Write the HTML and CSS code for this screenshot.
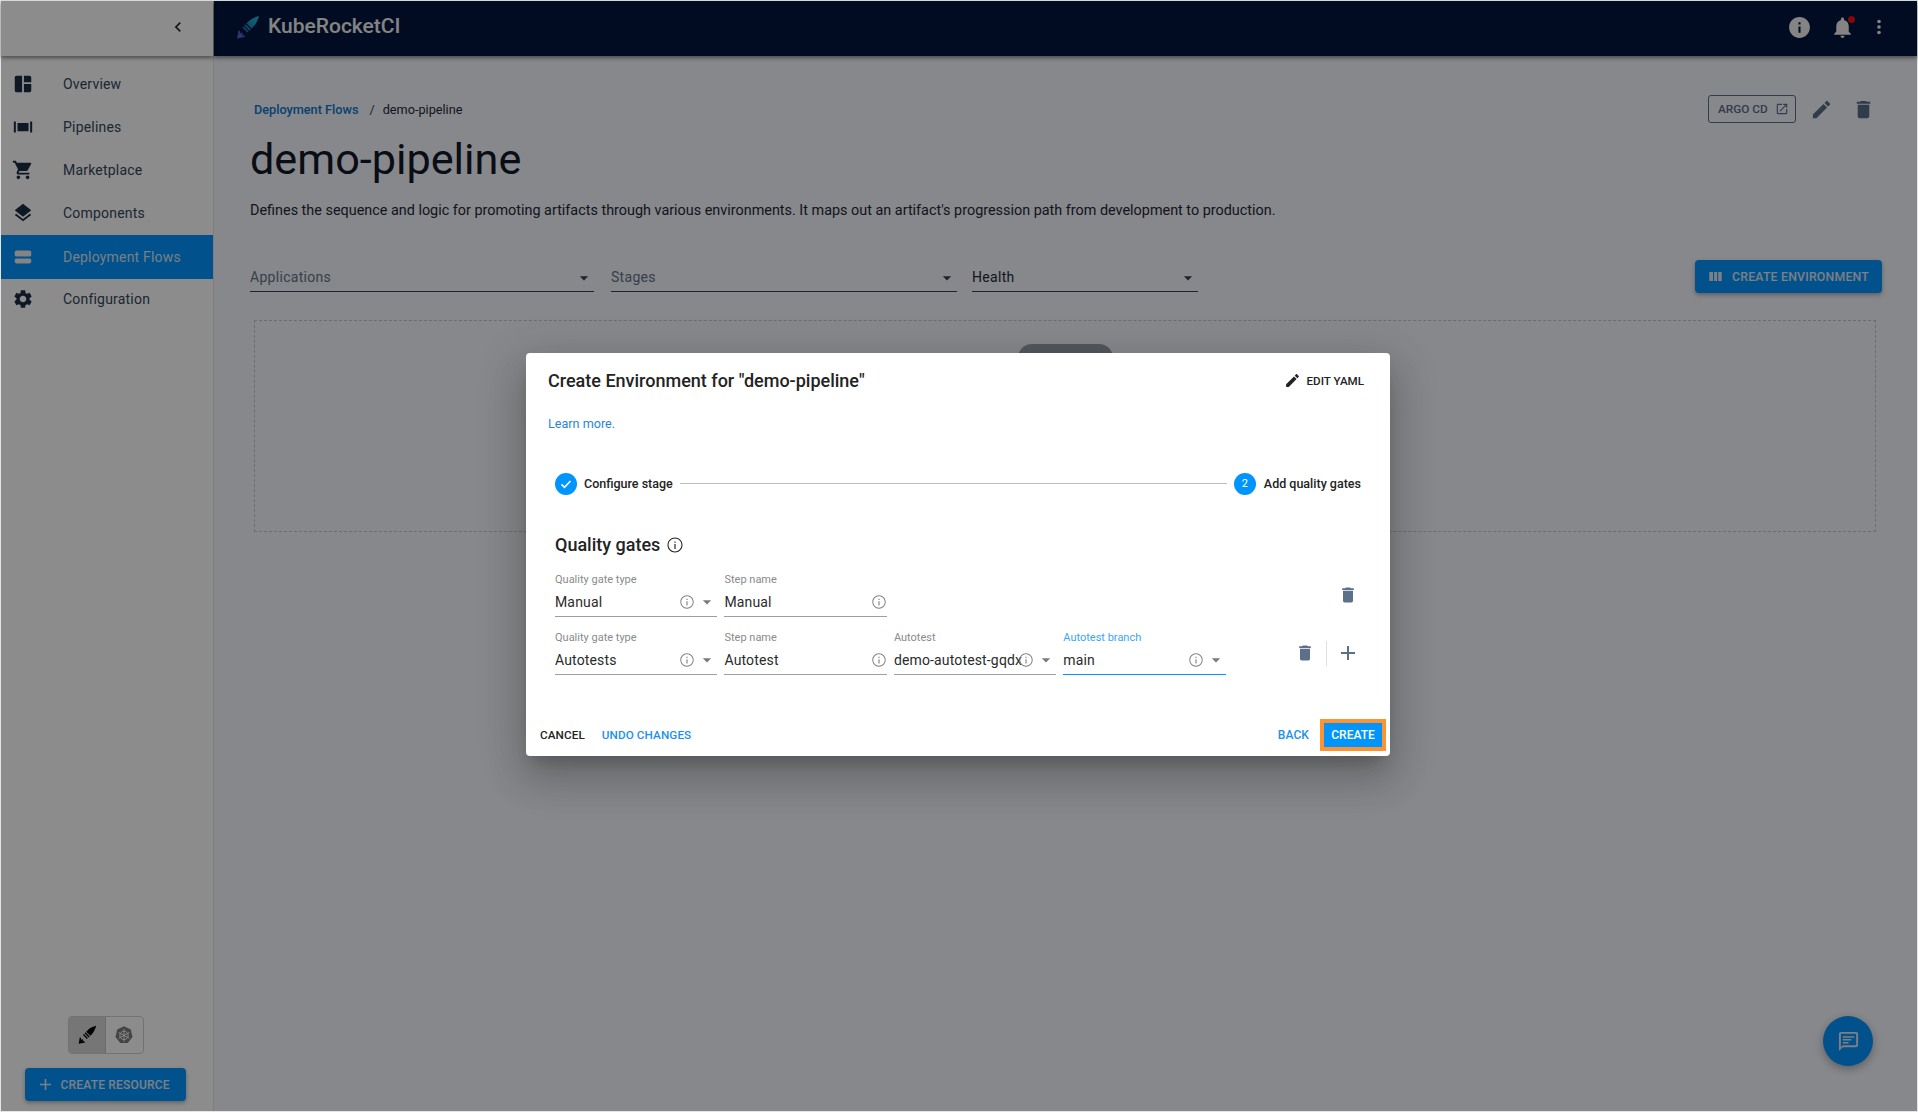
FILE: index.html
```html
<!DOCTYPE html>
<html lang="en">
<head>
  <meta charset="UTF-8">
  <title>demo-pipeline | KubeRocketCI</title>
  <link rel="stylesheet" href="styles.css">
</head>
<body>

  <svg class="defs" width="0" height="0">
    <linearGradient id="logo-grad" gradientUnits="userSpaceOnUse" x1="22" y1="2" x2="9" y2="15">
      <stop offset="0" stop-color="#22b8d8"/>
      <stop offset="1" stop-color="#1a74b8"/>
    </linearGradient>
    <symbol id="i-edit" viewBox="0 0 24 24"><path d="M3 17.25V21h3.75L17.81 9.94l-3.75-3.75L3 17.25zM20.71 7.04c.39-.39.39-1.02 0-1.41l-2.34-2.34c-.39-.39-1.02-.39-1.41 0l-1.83 1.83 3.75 3.75 1.83-1.83z"/></symbol>
    <symbol id="i-trash" viewBox="0 0 24 24"><path d="M6 19c0 1.1.9 2 2 2h8c1.1 0 2-.9 2-2V7H6v12zM19 4h-3.5l-1-1h-5l-1 1H5v2h14V4z"/></symbol>
    <symbol id="i-info" viewBox="0 0 24 24"><path d="M11.2 10.8h1.6v6.4h-1.6zm0-3.6h1.6v1.8h-1.6zM12 2C6.48 2 2 6.48 2 12s4.48 10 10 10 10-4.48 10-10S17.52 2 12 2zm0 18.6c-4.74 0-8.6-3.86-8.6-8.6S7.26 3.4 12 3.4s8.6 3.86 8.6 8.6-3.86 8.6-8.6 8.6z"/></symbol>
    <symbol id="i-caret" viewBox="0 0 24 24"><path d="M7 10l5 5 5-5z"/></symbol>
    <symbol id="i-plus" viewBox="0 0 24 24"><path d="M19 13h-6v6h-2v-6H5v-2h6V5h2v6h6v2z"/></symbol>
    <symbol id="i-blade" viewBox="0 0 24 24"><path d="M23 1c-4 1-8 3-10.500 5.500L11 8l5 5 1.500-1.500C20 9 22 5 23 1zM10.200 8.800l5 5-1.200 1.200-5-5zM8.200 10.800l4.800 4.800-1.100 1.100-4.800-4.800z"/></symbol>
    <symbol id="i-hilt" viewBox="0 0 24 24"><path d="M2 22.500l1.500-8 1.600 1.600-.6 2.300 1.700-1.700 1.500 1.500-1.700 1.700 2.300-.6 1.600 1.600z"/></symbol>
  </svg>

  <div class="app">
    <aside class="sidebar">
      <div class="sidebar-top">
        <svg class="chevron" viewBox="0 0 24 24"><path d="M15.41 7.41L14 6l-6 6 6 6 1.41-1.41L10.83 12z"/></svg>
      </div>

      <nav class="nav">
        <a class="nav-item">
          <svg class="nav-icon" viewBox="0 0 24 24"><path d="M5 3h6v18H5c-1.100 0-2-.9-2-2V5c0-1.100.9-2 2-2zm8 0h6c1.100 0 2 .9 2 2v5h-8V3zm0 9h8v7c0 1.100-.9 2-2 2h-6v-9z"/></svg>
          Overview
        </a>
        <a class="nav-item">
          <svg class="nav-icon" viewBox="0 0 24 24"><path d="M2 6h2.200v12H2zm17.800 0H22v12h-2.200zM6 7.500h12v9H6z"/></svg>
          Pipelines
        </a>
        <a class="nav-item">
          <svg class="nav-icon" viewBox="0 0 24 24"><path d="M7 18c-1.100 0-1.990.9-1.990 2S5.900 22 7 22s2-.9 2-2-.9-2-2-2zM1 2v2h2l3.600 7.590-1.350 2.450c-.16.28-.25.61-.25.96 0 1.100.9 2 2 2h12v-2H7.420c-.14 0-.25-.11-.25-.25l.03-.12.9-1.630h7.450c.75 0 1.410-.41 1.750-1.030l3.580-6.490c.08-.14.12-.31.12-.48 0-.55-.45-1-1-1H5.210l-.94-2H1zm16 16c-1.100 0-1.990.9-1.990 2s.89 2 1.990 2 2-.9 2-2-.9-2-2-2z"/></svg>
          Marketplace
        </a>
        <a class="nav-item">
          <svg class="nav-icon" viewBox="0 0 24 24"><path d="M11.990 18.540l-7.370-5.730L3 14.070l9 7 9-7-1.630-1.270-7.380 5.740zM12 16l7.360-5.730L21 9l-9-7-9 7 1.630 1.270L12 16z"/></svg>
          Components
        </a>
        <a class="nav-item active">
          <svg class="nav-icon" viewBox="0 0 24 24"><path d="M5 5h14c1.100 0 2 .9 2 2v2.500c0 1.100-.9 2-2 2H5c-1.100 0-2-.9-2-2V7c0-1.100.9-2 2-2zm0 8.500h14c1.100 0 2 .9 2 2V17c0 1.100-.9 2-2 2H5c-1.100 0-2-.9-2-2v-1.500c0-1.100.9-2 2-2z"/></svg>
          Deployment Flows
        </a>
        <a class="nav-item">
          <svg class="nav-icon" viewBox="0 0 24 24"><path d="M19.140 12.940c.04-.3.06-.61.06-.94 0-.32-.02-.64-.07-.94l2.030-1.580c.18-.14.23-.41.12-.61l-1.920-3.320c-.12-.22-.37-.29-.59-.22l-2.390.96c-.5-.38-1.030-.7-1.620-.94l-.36-2.540c-.04-.24-.24-.41-.48-.41h-3.840c-.24 0-.43.17-.47.41l-.36 2.540c-.59.24-1.130.57-1.620.94l-2.390-.96c-.22-.08-.47 0-.59.22L2.740 8.870c-.12.21-.08.47.12.61l2.030 1.580c-.05.3-.09.63-.09.94s.02.64.07.94l-2.030 1.580c-.18.14-.23.41-.12.61l1.920 3.320c.12.22.37.29.59.22l2.390-.96c.5.38 1.030.7 1.620.94l.36 2.540c.05.24.24.41.48.41h3.840c.24 0 .44-.17.47-.41l.36-2.540c.59-.24 1.130-.56 1.620-.94l2.390.96c.22.08.47 0 .59-.22l1.920-3.320c.12-.22.07-.47-.12-.61l-2.010-1.580zM12 15.600c-1.980 0-3.600-1.620-3.600-3.600s1.620-3.600 3.600-3.600 3.600 1.620 3.600 3.600-1.620 3.600-3.600 3.600z"/></svg>
          Configuration
        </a>
      </nav>

      <div class="sidebar-bottom">
        <div class="toggle-group">
          <span class="toggle selected">
            <svg viewBox="0 0 24 24">
              <use href="#i-blade"/>
              <use href="#i-hilt"/>
            </svg>
          </span>
          <span class="toggle">
            <svg viewBox="0 0 24 24">
              <path class="kube-body" d="M12 1.500l8.200 3.900 2 8.900-5.700 7.200h-9l-5.700-7.200 2-8.900z"/>
              <g class="kube-wheel">
                <circle cx="12" cy="12.500" r="5"/>
                <path d="M12 5v15M5.500 9l13 7M18.500 9l-13 7"/>
              </g>
            </svg>
          </span>
        </div>
        <button class="btn-primary btn-resource">
          <svg viewBox="0 0 24 24"><use href="#i-plus"/></svg>
          CREATE RESOURCE
        </button>
      </div>
    </aside>

    <div class="content">
      <header class="topbar">
        <div class="brand">
          <svg class="brand-logo" viewBox="0 0 24 24">
            <use class="logo-blade" href="#i-blade"/>
            <use class="logo-hilt" href="#i-hilt"/>
          </svg>
          <span class="brand-name">KubeRocketCI</span>
        </div>
        <div class="topbar-actions">
          <svg class="top-info" viewBox="0 0 24 24"><path d="M12 2C6.480 2 2 6.480 2 12s4.480 10 10 10 10-4.480 10-10S17.520 2 12 2zm1 15h-2v-6h2v6zm0-8h-2V7h2v2z"/></svg>
          <span class="bell">
            <svg viewBox="0 0 24 24"><path d="M12 22c1.100 0 2-.9 2-2h-4c0 1.100.89 2 2 2zm6-6v-5c0-3.070-1.640-5.640-4.500-6.320V4c0-.83-.67-1.500-1.500-1.500s-1.500.67-1.500 1.500v.68C7.630 5.360 6 7.920 6 11v5l-2 2v1h16v-1l-2-2z"/></svg>
            <span class="bell-dot"></span>
          </span>
          <svg class="top-more" viewBox="0 0 24 24"><circle cx="12" cy="6" r="2"/><circle cx="12" cy="12" r="2"/><circle cx="12" cy="18" r="2"/></svg>
        </div>
      </header>

      <main class="page">
        <div class="page-head">
          <div class="breadcrumbs">
            <a class="crumb-link">Deployment Flows</a>
            <span class="crumb-sep">/</span>
            <span class="crumb-current">demo-pipeline</span>
          </div>
          <div class="page-actions">
            <button class="btn-outline">
              ARGO CD
              <svg viewBox="0 0 24 24"><path d="M19 19H5V5h7V3H5c-1.110 0-2 .9-2 2v14c0 1.100.89 2 2 2h14c1.100 0 2-.9 2-2v-7h-2v7zM14 3v2h3.590l-9.830 9.830 1.410 1.410L19 6.410V10h2V3h-7z"/></svg>
            </button>
            <svg class="page-icon" viewBox="0 0 24 24"><use href="#i-edit"/></svg>
            <svg class="page-icon" viewBox="0 0 24 24"><use href="#i-trash"/></svg>
          </div>
        </div>

        <h1 class="page-title">demo-pipeline</h1>
        <p class="page-desc">Defines the sequence and logic for promoting artifacts through various environments. It maps out an artifact's progression path from development to production.</p>

        <div class="filters">
          <div class="filter filter-apps">Applications<svg viewBox="0 0 24 24"><use href="#i-caret"/></svg></div>
          <div class="filter filter-stages">Stages<svg viewBox="0 0 24 24"><use href="#i-caret"/></svg></div>
          <div class="filter filter-health">Health<svg viewBox="0 0 24 24"><use href="#i-caret"/></svg></div>
          <button class="btn-primary btn-env">
            <svg viewBox="0 0 24 24"><path d="M10 18.500h4.300v-13H10v13zm-6.800 0h5.300v-13H3.200v13zM15.800 5.500v13h5v-13h-5z"/></svg>
            CREATE ENVIRONMENT
          </button>
        </div>

        <section class="empty-panel">
          <span class="empty-pill"></span>
        </section>
      </main>
    </div>

    <button class="chat-fab">
      <svg viewBox="0 0 24 24"><path d="M20 2H4c-1.100 0-2 .9-2 2v18l4-4h14c1.100 0 2-.9 2-2V4c0-1.100-.9-2-2-2zm0 14H6l-2 2V4h16v12zM6 6.500h12V8H6zm0 3h9V11H6zm0 3h6V14H6z"/></svg>
    </button>

    <div class="backdrop">
      <div class="modal">
        <div class="modal-head">
          <h2 class="modal-title">Create Environment for "demo-pipeline"</h2>
          <button class="btn-yaml"><svg viewBox="0 0 24 24"><use href="#i-edit"/></svg>EDIT YAML</button>
        </div>
        <a class="learn-more">Learn more.</a>

        <div class="stepper">
          <span class="step-dot"><svg viewBox="0 0 24 24"><path d="M6 12.500l4 4 8-8.500"/></svg></span>
          <span class="step-label">Configure stage</span>
          <span class="step-line"></span>
          <span class="step-dot">2</span>
          <span class="step-label">Add quality gates</span>
        </div>

        <h3 class="gates-title">Quality gates <svg viewBox="0 0 24 24"><use href="#i-info"/></svg></h3>

        <div class="gate-row">
          <div class="gate-fields">
            <div class="field">
              <label>Quality gate type</label>
              <div class="field-value"><span>Manual</span><svg class="info" viewBox="0 0 24 24"><use href="#i-info"/></svg><svg class="caret" viewBox="0 0 24 24"><use href="#i-caret"/></svg></div>
            </div>
            <div class="field">
              <label>Step name</label>
              <div class="field-value"><span>Manual</span><svg class="info" viewBox="0 0 24 24"><use href="#i-info"/></svg></div>
            </div>
          </div>
          <div class="gate-actions">
            <svg class="action-trash" viewBox="0 0 24 24"><use href="#i-trash"/></svg>
          </div>
        </div>

        <div class="gate-row">
          <div class="gate-fields">
            <div class="field">
              <label>Quality gate type</label>
              <div class="field-value"><span>Autotests</span><svg class="info" viewBox="0 0 24 24"><use href="#i-info"/></svg><svg class="caret" viewBox="0 0 24 24"><use href="#i-caret"/></svg></div>
            </div>
            <div class="field">
              <label>Step name</label>
              <div class="field-value"><span>Autotest</span><svg class="info" viewBox="0 0 24 24"><use href="#i-info"/></svg></div>
            </div>
            <div class="field">
              <label>Autotest</label>
              <div class="field-value"><span>demo-autotest-gqdx</span><svg class="info" viewBox="0 0 24 24"><use href="#i-info"/></svg><svg class="caret" viewBox="0 0 24 24"><use href="#i-caret"/></svg></div>
            </div>
            <div class="field focused">
              <label>Autotest branch</label>
              <div class="field-value"><span>main</span><svg class="info" viewBox="0 0 24 24"><use href="#i-info"/></svg><svg class="caret" viewBox="0 0 24 24"><use href="#i-caret"/></svg></div>
            </div>
          </div>
          <div class="gate-actions">
            <svg class="action-trash" viewBox="0 0 24 24"><use href="#i-trash"/></svg>
            <span class="gate-divider"></span>
            <svg viewBox="0 0 24 24"><use href="#i-plus"/></svg>
          </div>
        </div>

        <div class="modal-foot">
          <button class="btn-text btn-cancel">CANCEL</button>
          <button class="btn-text btn-undo">UNDO CHANGES</button>
          <button class="btn-text btn-back">BACK</button>
          <button class="btn-create">CREATE</button>
        </div>
      </div>
    </div>
  </div>

</body>
</html>
```

FILE: styles.css
```css
* {
  box-sizing: border-box;
}
html, body {
  height: 100%;
}
body {
  margin: 0;
  padding: 1px;
  background-color: #e4e4e4;
  font-family: Roboto, "Liberation Sans", sans-serif;
  color: #1f2937;
  overflow: hidden;
}
button {
  font-family: inherit;
  border: none;
  background: none;
  padding: 0;
}
.defs {
  position: absolute;
}
.app {
  position: relative;
  display: flex;
  height: 100%;
  background-color: #f5f7fd;
}

/* sidebar */
.sidebar {
  width: 213px;
  flex-shrink: 0;
  display: flex;
  flex-direction: column;
  background-color: #ffffff;
  border-right: 1px solid #e6e6e6;
}
.sidebar-top {
  height: 55px;
  display: flex;
  align-items: center;
  justify-content: flex-end;
  padding: 0 25px 3px 0;
  background-color: #fff;
  box-shadow: 0 2px 4px rgba(0, 0, 0, 0.45);
  position: relative;
}
.chevron {
  width: 20px;
  height: 20px;
  fill: #1c2a3a;
}
.nav {
  padding-top: 6px;
  flex: 1;
}
.nav-item {
  display: flex;
  align-items: center;
  height: 43px;
  padding-left: 11px;
  font-size: 14px;
  letter-spacing: 0.2px;
  color: #33475c;
}
.nav-item.active {
  height: 44px;
  margin-top: 1px;
  margin-bottom: -2px;
  padding-bottom: 1px;
  background-color: #0094ff;
  color: #dbe7f2;
}
.nav-icon {
  width: 22px;
  height: 22px;
  margin-right: 29px;
  fill: #1c2e44;
}
.nav-item.active .nav-icon {
  fill: #f0f0f0;
}
.sidebar-bottom {
  display: flex;
  flex-direction: column;
  align-items: center;
  padding: 0 4px 10px 0;
}
.toggle-group {
  display: flex;
  margin-bottom: 14px;
  margin-left: 1px;
  border: 1px solid #cfcfcf;
  border-radius: 4px;
}
.toggle {
  width: 37px;
  height: 36px;
  display: flex;
  align-items: center;
  justify-content: center;
}
.toggle.selected {
  background-color: #d8d8d8;
  border-right: 1px solid #c4c4c4;
}
.toggle svg {
  width: 20px;
  height: 20px;
  fill: #000;
}
.kube-body {
  fill: #7c7c7c;
}
.kube-wheel {
  fill: none;
  stroke: #fff;
  stroke-width: 1.100;
}
.btn-primary {
  display: flex;
  align-items: center;
  background-color: #0094ff;
  color: #e2e8f0;
  border-radius: 4px;
  font-weight: 500;
  box-shadow: 0 2px 4px rgba(0, 0, 0, 0.3);
}
.btn-resource {
  width: 161px;
  height: 33px;
  padding-left: 11px;
  font-size: 12px;
  letter-spacing: 0.2px;
}
.btn-resource svg {
  width: 19px;
  height: 19px;
  margin-right: 6px;
  fill: #e2e8f0;
}

/* top bar */
.content {
  flex: 1;
  min-width: 0;
  display: flex;
  flex-direction: column;
}
.topbar {
  height: 55px;
  flex-shrink: 0;
  display: flex;
  align-items: center;
  justify-content: space-between;
  padding: 0 27px 0 21px;
  background-color: #02163f;
  box-shadow: 0 2px 4px rgba(0, 0, 0, 0.45);
}
.brand {
  display: flex;
  align-items: center;
  padding-bottom: 5px;
}
.brand-logo {
  width: 25px;
  height: 25px;
  margin-right: 8px;
  margin-top: 2px;
}
.logo-blade {
  fill: url(#logo-grad);
}
.logo-hilt {
  fill: #5a63cf;
}
.brand-name {
  font-size: 21px;
  font-weight: 500;
  color: #f0f0f0;
}
.topbar-actions {
  display: flex;
  align-items: center;
  gap: 18px;
  padding-bottom: 3px;
}
.topbar-actions svg {
  display: block;
  fill: #f0f0f0;
}
.top-info {
  width: 25px;
  height: 25px;
}
.bell {
  position: relative;
  display: block;
  margin-right: -5px;
}
.bell svg {
  width: 25px;
  height: 25px;
}
.bell-dot {
  position: absolute;
  top: 1px;
  right: 0;
  width: 7px;
  height: 7px;
  border-radius: 50%;
  background-color: #f01010;
}
.top-more {
  width: 22px;
  height: 22px;
}

/* page */
.page {
  flex: 1;
  padding: 30px 35px 0 36px;
}
.page-head {
  display: flex;
  align-items: center;
  justify-content: space-between;
  height: 46px;
}
.breadcrumbs {
  display: flex;
  align-items: center;
  font-size: 12.700px;
  padding-left: 4px;
}
.crumb-link {
  color: #0a78cc;
  font-weight: 500;
}
.crumb-sep {
  margin: 0 8px 0 11px;
  color: #334155;
}
.crumb-current {
  color: #1f2937;
}
.page-actions {
  display: flex;
  align-items: center;
}
.btn-outline {
  display: flex;
  align-items: center;
  height: 28px;
  width: 88px;
  padding-left: 9px;
  border: 1px solid #5b6e88;
  border-radius: 3px;
  color: #5b6e88;
  font-size: 11.800px;
  font-weight: 500;
}
.btn-outline svg {
  width: 14px;
  height: 14px;
  margin-left: 7px;
  fill: #5b6e88;
}
.page-icon {
  width: 23px;
  height: 23px;
  margin-left: 14px;
  fill: #596d89;
}
.page-icon:last-child {
  margin-left: 19px;
  margin-right: 7px;
}
.page-title {
  margin: 3px 0 0;
  font-size: 43.200px;
  font-weight: 400;
  line-height: 50px;
  color: #111827;
}
.page-desc {
  margin: 16px 0 0;
  font-size: 14.400px;
  line-height: 20px;
  color: #1f2937;
}
.filters {
  display: flex;
  align-items: center;
  margin-top: 38px;
}
.filter {
  display: flex;
  align-items: center;
  justify-content: space-between;
  height: 32px;
  padding: 4px 0 1px 0;
  border-bottom: 1px solid #334155;
  font-size: 14px;
  letter-spacing: 0.3px;
  color: #64748b;
}
.filter svg {
  width: 20px;
  height: 20px;
  margin-top: 1px;
  fill: #334155;
}
.filter-apps {
  width: 344px;
  margin-right: 17px;
}
.filter-stages {
  width: 346px;
  margin-right: 15px;
}
.filter-health {
  width: 226px;
  color: #1f2937;
}
.btn-env {
  margin-left: auto;
  margin-top: 1px;
  width: 187px;
  height: 33px;
  padding-left: 12px;
  font-size: 12.300px;
  letter-spacing: 0.2px;
}
.btn-env svg {
  width: 17px;
  height: 17px;
  margin-right: 8px;
  fill: #e2e8f0;
}
.empty-panel {
  position: relative;
  margin: 27px 6px 0 4px;
  height: 212px;
  border: 1px dashed #c4c6cc;
  display: flex;
  justify-content: center;
}
.empty-pill {
  width: 95px;
  height: 30px;
  margin-top: 23px;
  border-radius: 14px;
  background-color: #9a9eae;
}
.chat-fab {
  position: absolute;
  right: 44px;
  bottom: 45px;
  width: 50px;
  height: 50px;
  display: flex;
  align-items: center;
  justify-content: center;
  border-radius: 50%;
  background-color: #0094ff;
  box-shadow: 0 3px 8px rgba(0, 0, 0, 0.3);
}
.chat-fab svg {
  width: 23px;
  height: 23px;
  fill: #e2e8f0;
}

/* dialog */
.backdrop {
  position: absolute;
  inset: 0;
  display: flex;
  align-items: center;
  justify-content: center;
  padding: 0 2px 0 0;
  background-color: rgba(0, 0, 0, 0.45);
}
.modal {
  width: 864px;
  height: 403px;
  position: relative;
  top: -2px;
  background-color: #fff;
  border-radius: 4px;
  box-shadow: 0 11px 15px -7px rgba(0, 0, 0, 0.2), 0 24px 38px 3px rgba(0, 0, 0, 0.14), 0 9px 46px 8px rgba(0, 0, 0, 0.12);
  color: #232323;
}
.modal-head {
  display: flex;
  align-items: center;
  justify-content: space-between;
  height: 56px;
  padding: 0 26px 0 22px;
}
.modal-title {
  margin: 0;
  font-size: 18px;
  font-weight: 500;
}
.btn-yaml {
  display: flex;
  align-items: center;
  font-size: 11.600px;
  font-weight: 500;
  color: #232323;
}
.btn-yaml svg {
  width: 17px;
  height: 17px;
  margin-right: 6px;
  fill: #232323;
}
.learn-more {
  display: block;
  margin: 6px 0 0 22px;
  font-size: 12.600px;
  line-height: 18px;
  color: #2a84dd;
}
.stepper {
  display: flex;
  align-items: center;
  margin: 40px 29px 0;
  height: 22px;
}
.step-dot {
  width: 22px;
  height: 22px;
  flex-shrink: 0;
  display: flex;
  align-items: center;
  justify-content: center;
  border-radius: 50%;
  background-color: #0094ff;
  color: #fff;
  font-size: 11px;
}
.step-dot svg {
  width: 18px;
  height: 18px;
  fill: none;
  stroke: #fff;
  stroke-width: 2.200;
}
.step-label {
  margin-left: 7px;
  font-size: 12.500px;
  font-weight: 500;
}
.step-label:last-child {
  margin-left: 8px;
}
.step-line {
  flex: 1;
  height: 1px;
  margin: 0 7px;
  background-color: #bdbdbd;
}
.gates-title {
  display: flex;
  align-items: center;
  margin: 38px 0 0 29px;
  height: 24px;
  font-size: 18px;
  font-weight: 500;
  white-space: pre;
}
.gates-title svg {
  width: 18px;
  height: 18px;
  margin-left: 1px;
  fill: #232323;
}
.gate-row {
  display: flex;
  align-items: center;
  height: 45px;
  margin: 0 29px 13px;
}
.gates-title + .gate-row {
  margin-top: 15px;
}
.gate-fields {
  display: grid;
  grid-template-columns: repeat(4, 162.250px);
  column-gap: 7.200px;
  height: 45px;
}
.field {
  display: flex;
  flex-direction: column;
  border-bottom: 1px solid #9e9e9e;
  min-width: 0;
}
.field label {
  font-size: 11px;
  line-height: 14px;
  padding-top: 1px;
  color: #8a8a8a;
}
.field-value {
  display: flex;
  align-items: center;
  height: 29px;
  font-size: 14px;
  letter-spacing: 0.15px;
  padding-top: 1px;
  color: #2b2b2b;
}
.field-value span {
  flex: 1;
  min-width: 0;
  white-space: nowrap;
}
.field .info {
  width: 16px;
  height: 16px;
  fill: #7a7a7a;
  flex-shrink: 0;
}
.field .caret {
  width: 20px;
  height: 20px;
  margin: 0 0 0 2px;
  fill: #7a7a7a;
  flex-shrink: 0;
}
.field.focused {
  border-bottom-color: #0094ff;
}
.field.focused label {
  color: #3aa6f5;
}
.gate-actions {
  margin-left: auto;
  margin-right: 1px;
  display: flex;
  align-items: center;
  position: relative;
  top: 1px;
}
.gate-actions svg {
  width: 24px;
  height: 24px;
  fill: #5c7089;
}
.gate-actions .action-trash {
  padding: 2px;
}
.gate-divider {
  width: 1px;
  height: 25px;
  margin: 0 9px;
  background-color: #e0e0e0;
}
.modal-foot {
  position: absolute;
  left: 0;
  right: 0;
  bottom: 0;
  display: flex;
  align-items: center;
  height: 40px;
  padding: 0 8px 1px 14px;
}
.btn-text {
  font-size: 11.700px;
  font-weight: 500;
  letter-spacing: 0.1px;
}
.btn-cancel {
  color: #232323;
}
.btn-undo {
  margin-left: 17px;
  color: #1e90f0;
}
.btn-back {
  margin-left: auto;
  margin-right: 15px;
  color: #1e90f0;
  font-size: 12px;
}
.btn-create {
  width: 58px;
  height: 24px;
  background-color: #0094ff;
  color: #fff;
  font-size: 12px;
  font-weight: 500;
  outline: 4px solid #ff9330;
}
```
